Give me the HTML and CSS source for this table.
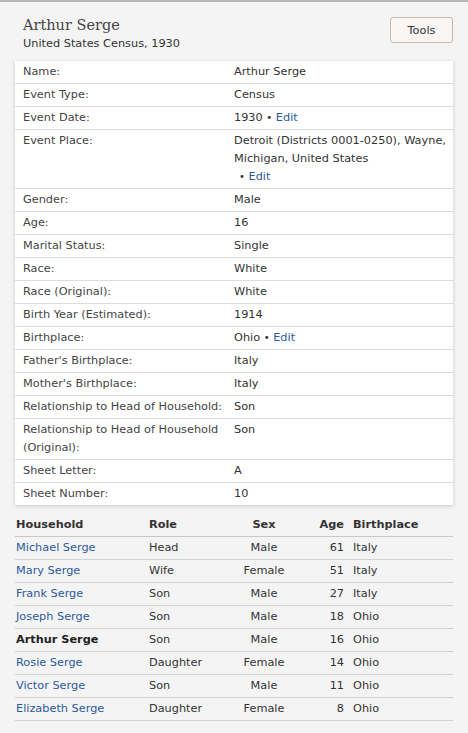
FILE: index.html
```html
<!DOCTYPE html>
<html lang="en">
<head>
<meta charset="utf-8">
<title>Arthur Serge — United States Census, 1930</title>
<link rel="stylesheet" href="styles.css">
</head>
<body>
<div class="page">
  <header class="record-head">
    <div class="titles">
      <h1 class="name">Arthur Serge</h1>
      <div class="collection">United States Census, 1930</div>
    </div>
    <button class="tools" type="button">Tools</button>
  </header>

  <div class="card">
    <table class="facts">
      <tr><td class="lbl">Name:</td><td class="val">Arthur Serge</td></tr>
      <tr><td class="lbl">Event Type:</td><td class="val">Census</td></tr>
      <tr><td class="lbl">Event Date:</td><td class="val">1930 <span class="dot">•</span> <a href="#">Edit</a></td></tr>
      <tr><td class="lbl">Event Place:</td><td class="val"><span class="nowrap">Detroit (Districts 0001-0250), Wayne,</span><br>Michigan, United States<br><span class="indent"></span><span class="dot">•</span> <a href="#">Edit</a></td></tr>
      <tr><td class="lbl">Gender:</td><td class="val">Male</td></tr>
      <tr><td class="lbl">Age:</td><td class="val">16</td></tr>
      <tr><td class="lbl">Marital Status:</td><td class="val">Single</td></tr>
      <tr><td class="lbl">Race:</td><td class="val">White</td></tr>
      <tr><td class="lbl">Race (Original):</td><td class="val">White</td></tr>
      <tr><td class="lbl">Birth Year (Estimated):</td><td class="val">1914</td></tr>
      <tr><td class="lbl">Birthplace:</td><td class="val">Ohio <span class="dot">•</span> <a href="#">Edit</a></td></tr>
      <tr><td class="lbl">Father's Birthplace:</td><td class="val">Italy</td></tr>
      <tr><td class="lbl">Mother's Birthplace:</td><td class="val">Italy</td></tr>
      <tr><td class="lbl">Relationship to Head of Household:</td><td class="val">Son</td></tr>
      <tr><td class="lbl">Relationship to Head of Household<br>(Original):</td><td class="val">Son</td></tr>
      <tr><td class="lbl">Sheet Letter:</td><td class="val">A</td></tr>
      <tr><td class="lbl">Sheet Number:</td><td class="val">10</td></tr>
    </table>
  </div>

  <table class="household">
    <thead>
      <tr><th class="c-name">Household</th><th class="c-role">Role</th><th class="c-sex">Sex</th><th class="c-age">Age</th><th class="c-place">Birthplace</th></tr>
    </thead>
    <tbody>
      <tr><td class="c-name"><a href="#">Michael Serge</a></td><td class="c-role">Head</td><td class="c-sex">Male</td><td class="c-age">61</td><td class="c-place">Italy</td></tr>
      <tr><td class="c-name"><a href="#">Mary Serge</a></td><td class="c-role">Wife</td><td class="c-sex">Female</td><td class="c-age">51</td><td class="c-place">Italy</td></tr>
      <tr><td class="c-name"><a href="#">Frank Serge</a></td><td class="c-role">Son</td><td class="c-sex">Male</td><td class="c-age">27</td><td class="c-place">Italy</td></tr>
      <tr><td class="c-name"><a href="#">Joseph Serge</a></td><td class="c-role">Son</td><td class="c-sex">Male</td><td class="c-age">18</td><td class="c-place">Ohio</td></tr>
      <tr class="self"><td class="c-name">Arthur Serge</td><td class="c-role">Son</td><td class="c-sex">Male</td><td class="c-age">16</td><td class="c-place">Ohio</td></tr>
      <tr><td class="c-name"><a href="#">Rosie Serge</a></td><td class="c-role">Daughter</td><td class="c-sex">Female</td><td class="c-age">14</td><td class="c-place">Ohio</td></tr>
      <tr><td class="c-name"><a href="#">Victor Serge</a></td><td class="c-role">Son</td><td class="c-sex">Male</td><td class="c-age">11</td><td class="c-place">Ohio</td></tr>
      <tr><td class="c-name"><a href="#">Elizabeth Serge</a></td><td class="c-role">Daughter</td><td class="c-sex">Female</td><td class="c-age">8</td><td class="c-place">Ohio</td></tr>
    </tbody>
  </table>
</div>
</body>
</html>
```

FILE: styles.css
```css
html, body {
  margin: 0;
  padding: 0;
}

body {
  background: #f4f4f4;
  border-top: 2px solid #b9b9b9;
  font-family: "DejaVu Sans", Verdana, sans-serif;
  font-size: 11.3px;
  line-height: 18px;
  color: #333;
}

a {
  color: #2d5a9b;
  text-decoration: none;
}

.page {
  padding: 0 15px 20px;
}

.record-head {
  display: flex;
  justify-content: space-between;
  align-items: flex-start;
  padding: 13px 0 0 8px;
  margin-bottom: 8px;
}

.name {
  margin: 0;
  font-family: "DejaVu Serif", Georgia, serif;
  font-weight: normal;
  font-size: 14.5px;
  line-height: 20px;
  color: #444;
}

.collection {
  color: #333;
}

.tools {
  margin-top: 2px;
  width: 63px;
  height: 26px;
  padding: 0;
  border: 1px solid #c8b8ae;
  border-radius: 3px;
  background: #f8f5f3;
  font-family: "DejaVu Sans", Verdana, sans-serif;
  font-size: 11.3px;
  color: #333;
}

.card {
  background: #fff;
  box-shadow: 0 1px 4px rgba(0, 0, 0, 0.18);
}

.facts {
  width: 100%;
  border-collapse: collapse;
  table-layout: fixed;
}

.facts td {
  box-sizing: border-box;
  padding: 2px 2px 2px 0;
  vertical-align: top;
  border-bottom: 1px solid #dcdcdc;
}

.facts tr:last-child td {
  border-bottom: 0;
}

.facts .lbl {
  width: 50%;
  padding-left: 8px;
  padding-right: 4px;
  color: #444;
}

.facts .dot {
  font-size: 10px;
}

.nowrap {
  white-space: nowrap;
}

.indent {
  display: inline-block;
  width: 5px;
}

.household {
  width: 100%;
  margin-top: 9px;
  border-collapse: collapse;
  table-layout: fixed;
}

.household th,
.household td {
  box-sizing: border-box;
  padding: 2px 0;
  border-bottom: 1px solid #d2d2d2;
  text-align: left;
  white-space: nowrap;
}

.household th {
  font-weight: bold;
  color: #333;
  border-bottom-color: #c8c8c8;
}

.household .c-name { width: 134px; padding-left: 1px; }
.household .c-role { width: 80px; }
.household .c-sex { width: 70px; text-align: center; }
.household .c-age { width: 45px; text-align: right; }
.household .c-place { padding-left: 9px; }

.household .self .c-name {
  font-weight: bold;
  color: #222;
}
```
